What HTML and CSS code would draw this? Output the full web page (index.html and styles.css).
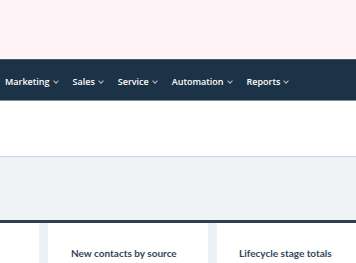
FILE: index.html
```html
<!DOCTYPE html>
<html lang="en">
<head>
    <meta charset="UTF-8">
    <meta name="viewport" content="width=device-width, initial-scale=1.0">
    <title>Dashboard</title>
    <link rel="stylesheet" href="styles.css">
</head>
<body>
    <!-- Promo banner -->
    <div class="banner"></div>

    <!-- Main navigation -->
    <nav class="nav">
        <a class="nav-item">Marketing <span class="chev"></span></a>
        <a class="nav-item">Sales <span class="chev"></span></a>
        <a class="nav-item">Service <span class="chev"></span></a>
        <a class="nav-item">Automation <span class="chev"></span></a>
        <a class="nav-item">Reports <span class="chev"></span></a>
    </nav>

    <div class="header"></div>
    <div class="toolbar"></div>

    <!-- Dashboard cards -->
    <div class="grid">
        <div class="side"></div>
        <div class="gutter"></div>
        <div class="card"><h2>New contacts by source</h2></div>
        <div class="gutter"></div>
        <div class="card"><h2>Lifecycle stage totals</h2></div>
    </div>
</body>
</html>
```

FILE: styles.css
```css
body {
    margin: 0;
    font-family: "Open Sans", Lato, sans-serif;
    background: #fff;
}
.banner {
    height: 57px;
    background: #fdf3f6;
    border-bottom: 2px solid #fdf8f6;
}
.nav {
    height: 37px;
    padding-top: 3px;
    background: #1c3246;
    border-top: 1px solid #4b5b69;
    border-bottom: 1px solid #7d8ea0;
    display: flex;
    align-items: center;
    padding-left: 5px;
}
.nav-item {
    color: #fff;
    font-size: 9px;
    font-weight: 600;
    display: flex;
    align-items: center;
    margin-right: 15px;
}
.chev {
    width: 3px;
    height: 3px;
    border-right: 1px solid #b7c3cf;
    border-bottom: 1px solid #b7c3cf;
    transform: rotate(45deg);
    margin-left: 4px;
    margin-top: -1px;
}
.header {
    height: 55px;
    border-bottom: 1px solid #cbd6e2;
}
.toolbar {
    height: 63px;
    background: #f0f3f6;
    border-bottom: 3px solid #2d3e50;
}
.grid {
    display: flex;
    height: 40px;
}
.side {
    width: 39px;
}
.gutter {
    width: 9px;
    background: #eef1f4;
}
.card {
    width: 160px;
    flex: none;
}
.card:last-child {
    flex: 1;
}
.card h2 {
    margin: 0;
    padding: 24px 0 0 23px;
    font-family: Lato, sans-serif;
    font-size: 10px;
    font-weight: 700;
    color: #33475b;
}
.card:last-child h2 {
    padding-left: 22px;
}
```
